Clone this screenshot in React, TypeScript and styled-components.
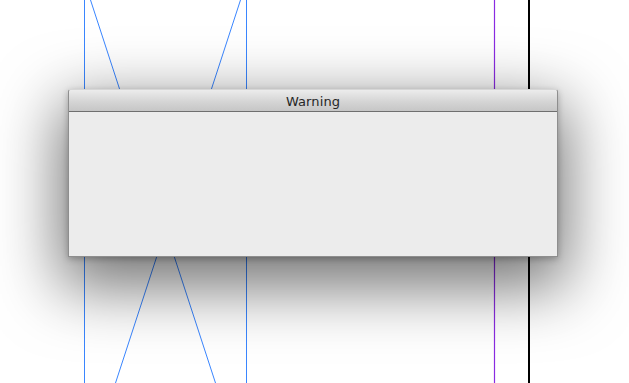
import React from "react";
import styled, { createGlobalStyle } from "styled-components";

const Global = createGlobalStyle`
  html, body { margin: 0; padding: 0; background: #ffffff; }
  body { width: 629px; height: 383px; overflow: hidden; font-family: "DejaVu Sans", "Liberation Sans", sans-serif; }
`;

const Stage = styled.div`
  position: relative;
  width: 629px;
  height: 383px;
  background: #ffffff;
  overflow: hidden;
`;

const Guides = styled.svg`
  position: absolute;
  inset: 0;
  width: 629px;
  height: 383px;
`;

const Sheet = styled.div`
  position: absolute;
  left: 68px;
  top: 89px;
  width: 490px;
  height: 168px;
  display: flex;
  flex-direction: column;
  box-sizing: border-box;
  border: 1px solid #8e8e8e;
  border-top-color: #d6d6d6;
  border-radius: 3px 3px 0 0;
  background: #ececec;
  box-shadow: 0 22px 64px 8px rgba(0, 0, 0, 0.55), 0 2px 6px rgba(0, 0, 0, 0.25);
`;

const TitleBar = styled.div`
  height: 21px;
  flex: none;
  display: flex;
  align-items: center;
  justify-content: center;
  padding-top: 1px;
  box-sizing: border-box;
  height: 22px;
  background: linear-gradient(#ececec, #d3d3d3 60%, #c6c6c6);
  border-bottom: 1px solid #6f6f6f;
  border-radius: 3px 3px 0 0;
  font-size: 13px;
  color: #262626;
  letter-spacing: 0.1px;
`;

const Body = styled.div`
  flex: 1;
  background: #ececec;
`;

export default function App() {
  return (
    <>
      <Global />
      <Stage>
        <Guides viewBox="0 0 629 383">
          <line x1="84.5" y1="0" x2="84.5" y2="383" stroke="#3a86ff" strokeWidth="1" />
          <line x1="246.5" y1="0" x2="246.5" y2="383" stroke="#3a86ff" strokeWidth="1" />
          <line x1="90.5" y1="0" x2="215.5" y2="383" stroke="#3a86ff" strokeWidth="1" />
          <line x1="240.5" y1="0" x2="115.5" y2="383" stroke="#3a86ff" strokeWidth="1" />
          <line x1="494.5" y1="0" x2="494.5" y2="383" stroke="#8a2be2" strokeWidth="1.2" />
          <line x1="529" y1="0" x2="529" y2="383" stroke="#000000" strokeWidth="2" />
        </Guides>
        <Sheet>
          <TitleBar>Warning</TitleBar>
          <Body />
        </Sheet>
      </Stage>
    </>
  );
}
